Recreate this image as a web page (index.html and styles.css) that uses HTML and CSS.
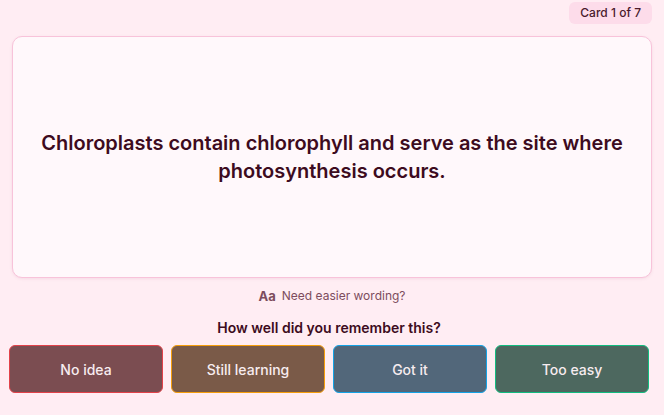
FILE: index.html
```html
<!DOCTYPE html>
<html lang="en">
<head>
    <meta charset="UTF-8">
    <meta name="viewport" content="width=device-width, initial-scale=1.0">
    <title>Flashcards</title>
    <link rel="stylesheet" href="styles.css">
</head>
<body>
    <div class="top-bar">
        <span class="counter">Card 1 of 7</span>
    </div>

    <div class="card">
        <p class="card-text">Chloroplasts contain chlorophyll and serve as the site where photosynthesis occurs.</p>
    </div>

    <button class="hint" type="button">
        <span class="hint-icon">Aa</span>
        <span>Need easier wording?</span>
    </button>

    <section class="rating-panel">
        <h2 class="prompt">How well did you remember this?</h2>
        <div class="ratings">
            <button class="rate rate-again" type="button">No idea</button>
            <button class="rate rate-hard" type="button">Still learning</button>
            <button class="rate rate-good" type="button">Got it</button>
            <button class="rate rate-easy" type="button">Too easy</button>
        </div>
    </section>
</body>
</html>
```

FILE: styles.css
```css
:root {
    --page-bg: #ffedf3;
    --card-bg: #fff8fb;
    --card-border: #f8c3da;
    --ink: #3d0b20;
    --muted: #7d4c5d;
}

* {
    box-sizing: border-box;
    margin: 0;
    padding: 0;
    font-family: Inter, 'Noto Sans', sans-serif;
}

body {
    background-color: var(--page-bg);
    color: var(--ink);
    padding: 2px 0 0;
}

.top-bar {
    display: flex;
    justify-content: flex-end;
    padding-right: 12px;
}

.counter {
    display: inline-block;
    background-color: #fddcea;
    color: #4a1a2c;
    font-size: 12px;
    font-weight: 500;
    line-height: 16px;
    padding: 3px 11px;
    border-radius: 6px;
}

.card {
    margin: 12px 12px 0;
    height: 242px;
    background-color: var(--card-bg);
    border: 1px solid var(--card-border);
    border-radius: 10px;
    box-shadow: 0 1px 3px rgba(180, 90, 130, 0.12);
    display: flex;
    align-items: center;
    justify-content: center;
    padding: 0 20px;
}

.card-text {
    text-align: center;
    font-size: 20px;
    font-weight: 600;
    line-height: 28px;
}

.hint {
    display: flex;
    align-items: center;
    justify-content: center;
    gap: 6px;
    margin: 10px auto 0;
    background: none;
    border: none;
    color: var(--muted);
    font-size: 12px;
    line-height: 16px;
}

.hint-icon {
    font-weight: 700;
    font-size: 13px;
}

.rating-panel {
    width: 640px;
    margin: 14px 0 0 9px;
}

.prompt {
    text-align: center;
    font-size: 14px;
    font-weight: 600;
    line-height: 20px;
}

.ratings {
    display: grid;
    grid-template-columns: repeat(4, 1fr);
    gap: 8px;
    margin-top: 7px;
}

.rate {
    height: 48px;
    border-radius: 6px;
    border: 1px solid;
    color: #f7ecef;
    font-size: 14px;
    font-weight: 500;
}

.rate-again {
    background-color: #7b4d51;
    border-color: #e2424a;
}

.rate-hard {
    background-color: #7a5a48;
    border-color: #f59e0b;
}

.rate-good {
    background-color: #52677a;
    border-color: #14a3e6;
}

.rate-easy {
    background-color: #4d685f;
    border-color: #12bc80;
}
```
